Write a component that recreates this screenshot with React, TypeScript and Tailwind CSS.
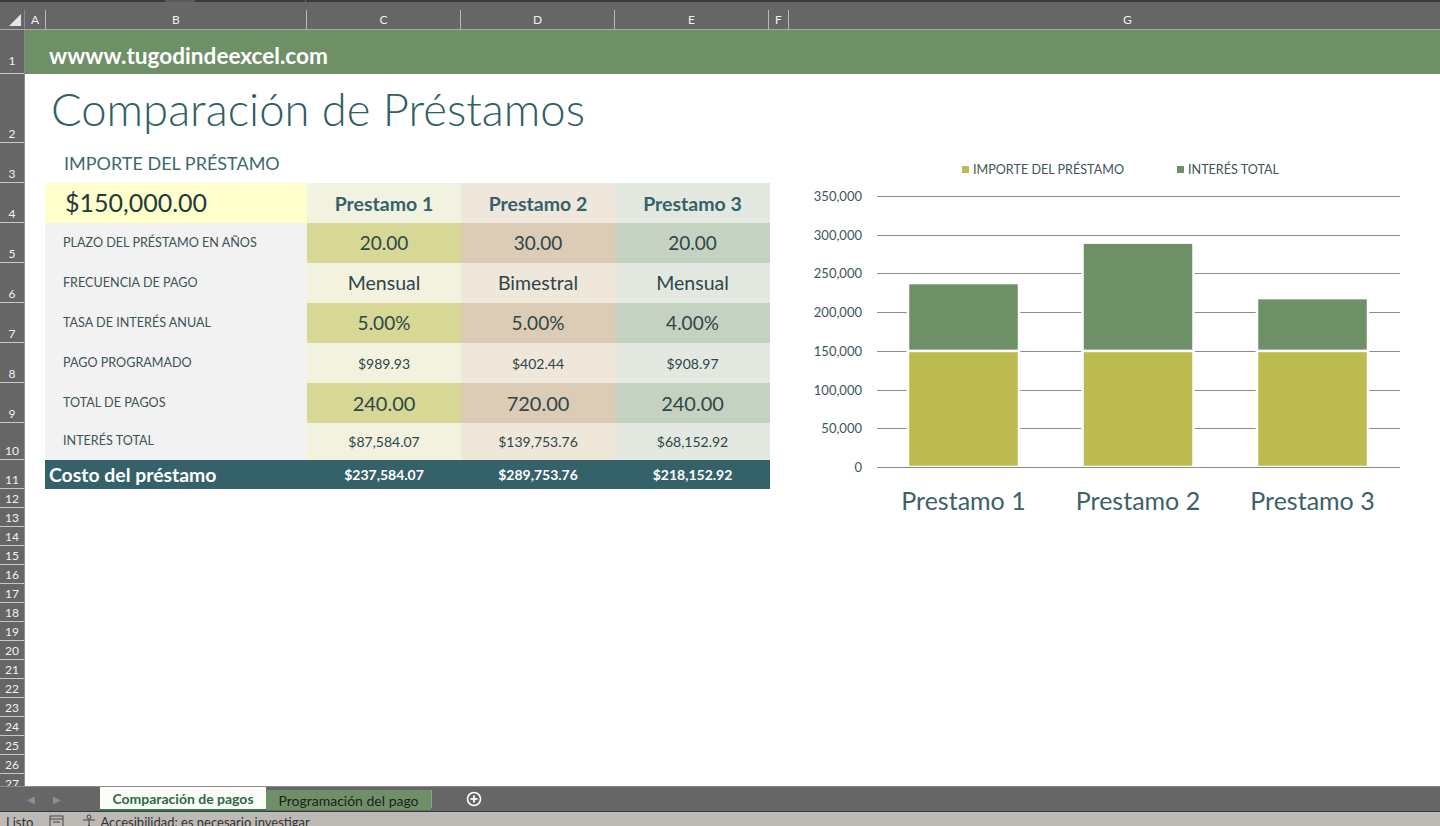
import React from "react";

const FONT = { fontFamily: "Lato, 'Open Sans', 'Liberation Sans', sans-serif" };

const rowHeights: number[] = [44, 69, 40, 40, 40, 40, 40, 40, 40, 37, 29, 19, 19, 19, 19, 19, 19, 19, 19, 19, 19, 19, 19, 19, 19, 19, 19];

type Row = { label: string; vals: string[]; dark: boolean; size: string; h: string };

const rows: Row[] = [
  { label: "PLAZO DEL PRÉSTAMO EN AÑOS", vals: ["20.00", "30.00", "20.00"], dark: true, size: "text-[19px]", h: "h-[40px]" },
  { label: "FRECUENCIA DE PAGO", vals: ["Mensual", "Bimestral", "Mensual"], dark: false, size: "text-[19.5px]", h: "h-[40px]" },
  { label: "TASA DE INTERÉS ANUAL", vals: ["5.00%", "5.00%", "4.00%"], dark: true, size: "text-[19px]", h: "h-[40px]" },
  { label: "PAGO PROGRAMADO", vals: ["$989.93", "$402.44", "$908.97"], dark: false, size: "text-[14px]", h: "h-[40px]" },
  { label: "TOTAL DE PAGOS", vals: ["240.00", "720.00", "240.00"], dark: true, size: "text-[20px]", h: "h-[40px]" },
  { label: "INTERÉS TOTAL", vals: ["$87,584.07", "$139,753.76", "$68,152.92"], dark: false, size: "text-[14px]", h: "h-[37px]" },
];

const darkBg = ["bg-[#d7d895]", "bg-[#dccbb5]", "bg-[#c5d2c1]"];
const lightBg = ["bg-[#f2f2df]", "bg-[#efe7da]", "bg-[#e3e9e1]"];
const colW = ["w-[154px]", "w-[154px]", "w-[155px]"];

function ColHeader() {
  const cols: { l: string; w: string }[] = [
    { l: "A", w: "w-[21px]" },
    { l: "B", w: "w-[261px]" },
    { l: "C", w: "w-[154px]" },
    { l: "D", w: "w-[154px]" },
    { l: "E", w: "w-[154px]" },
    { l: "F", w: "w-[20px]" },
    { l: "G", w: "w-[678px]" },
  ];
  return (
    <div className="flex h-[20px] shrink-0 border-b border-[#a9a9a9] bg-[#666666] overflow-hidden">
      <div className="relative w-[25px] shrink-0 border-r border-[#8a8a8a]">
        <svg width="12" height="12" className="absolute right-[3px] bottom-[3px]">
          <polygon points="12,0 12,12 0,12" fill="#e6e6e6" />
        </svg>
      </div>
      {cols.map((c) => (
        <div
          key={c.l}
          className={`${c.w} shrink-0 flex items-center justify-center border-r border-[#b8b8b8] text-[12px] text-[#f0f0f0] leading-none pt-[1px]`}
        >
          {c.l}
        </div>
      ))}
    </div>
  );
}

function RowHeaders() {
  return (
    <div className="w-[25px] shrink-0 bg-[#666666] border-r border-[#8a8a8a] overflow-hidden">
      {rowHeights.map((h, i) => (
        <div
          key={i}
          style={{ height: h }}
          className={`flex items-end justify-center border-b border-[#c8c8c8] text-[12px] text-[#f2f2f2] leading-none ${i === 0 ? "pb-[6px]" : "pb-[2px]"}`}
        >
          {i + 1}
        </div>
      ))}
    </div>
  );
}

function Chart() {
  const y0 = 324;
  const scale = 271 / 350000;
  const ticks = [0, 50000, 100000, 150000, 200000, 250000, 300000, 350000];
  const bars = [
    { c: 173.5, total: 237584.07, name: "Prestamo 1" },
    { c: 348, total: 289753.76, name: "Prestamo 2" },
    { c: 522.5, total: 218152.92, name: "Prestamo 3" },
  ];
  const fmt = (n: number) => n.toLocaleString("en-US");
  return (
    <svg width="650" height="380" className="block" style={FONT}>
      <rect x="172" y="23" width="7" height="7" fill="#bcbb50" />
      <text x="183" y="31" fontSize="12.6" fill="#3e5559">IMPORTE DEL PRÉSTAMO</text>
      <rect x="387" y="23" width="7" height="7" fill="#6e9066" />
      <text x="398" y="31" fontSize="12.6" fill="#3e5559">INTERÉS TOTAL</text>
      {ticks.map((t) => {
        const y = Math.round(y0 - t * scale) + 0.5;
        return (
          <g key={t}>
            <line x1="87" x2="610" y1={y} y2={y} stroke="#8c8c8c" strokeWidth="1" />
            <text x="72" y={y + 4.5} fontSize="13" fill="#3e5559" textAnchor="end">
              {fmt(t)}
            </text>
          </g>
        );
      })}
      {bars.map((b) => {
        const yTop = y0 - b.total * scale;
        const yMid = y0 - 150000 * scale;
        const x = b.c - 55.5;
        return (
          <g key={b.name}>
            <rect x={x} y={yMid} width="111" height={y0 - yMid} fill="#bcbb50" stroke="#ffffff" strokeWidth="2.5" />
            <rect x={x} y={yTop} width="111" height={yMid - yTop} fill="#6e9066" stroke="#ffffff" strokeWidth="2.5" />
            <line x1={x - 4} x2={x + 115} y1={y0 + 0.5} y2={y0 + 0.5} stroke="#8c8c8c" strokeWidth="1" />
            <text x={b.c} y="367" fontSize="25" fill="#3b6268" textAnchor="middle">
              {b.name}
            </text>
          </g>
        );
      })}
    </svg>
  );
}

function Table() {
  return (
    <div className="w-[725px] shrink-0">
      <div className="h-[40px] flex items-center pl-[19px] text-[18px] text-[#3b6a70]">IMPORTE DEL PRÉSTAMO</div>
      <div className="flex h-[40px]">
        <div className="w-[262px] bg-[#ffffcc] flex items-center pl-[20px] text-[25px] text-[#213a3d]">$150,000.00</div>
        {["Prestamo 1", "Prestamo 2", "Prestamo 3"].map((p, i) => (
          <div
            key={p}
            className={`${colW[i]} ${i === 0 ? "bg-[#f2f2e0]" : i === 1 ? "bg-[#efe7db]" : "bg-[#e3e9e1]"} flex items-center justify-center pt-[2px] text-[19.5px] font-bold text-[#35626a]`}
          >
            {p}
          </div>
        ))}
      </div>
      {rows.map((r) => (
        <div key={r.label} className={`flex ${r.h}`}>
          <div className="w-[262px] bg-[#f2f2f2] flex items-center pl-[18px] text-[12.6px] text-[#3d5357]">{r.label}</div>
          {r.vals.map((v, i) => (
            <div
              key={i}
              className={`${colW[i]} ${r.dark ? darkBg[i] : lightBg[i]} flex items-center justify-center ${r.size} text-[#2e4649]`}
            >
              {v}
            </div>
          ))}
        </div>
      ))}
      <div className="flex h-[29px] bg-[#35626a] text-white">
        <div className="w-[262px] flex items-center pl-[4px] text-[19.4px] font-bold">Costo del préstamo</div>
        {["$237,584.07", "$289,753.76", "$218,152.92"].map((v, i) => (
          <div key={v} className={`${colW[i]} flex items-center justify-center text-[14px] font-bold`}>
            {v}
          </div>
        ))}
      </div>
    </div>
  );
}

function Tabs() {
  return (
    <div className="h-[26px] shrink-0 flex bg-[#666666] border-t border-[#8a8a8a] border-b border-b-[#3a3a3a]">
      <div className="w-[100px] flex items-center">
        <span className="ml-[27px] text-[#8f8f8f] text-[10px] leading-none">◀</span>
        <span className="ml-[18px] text-[#8f8f8f] text-[10px] leading-none">▶</span>
      </div>
      <div className="w-[166px] bg-[#fbfbf7] border-b-2 border-[#2f7a4f] flex items-center justify-center text-[14px] font-bold text-[#2a6b45]">
        Comparación de pagos
      </div>
      <div className="w-[165px] mt-[3px] mb-[1px] bg-[#6e9066] flex items-center justify-center text-[14px] text-[#1e1e1e]">
        Programación del pago
      </div>
      <div className="w-[1px] my-[3px] bg-[#9a9a9a]" />
      <div className="ml-[34px] flex items-center">
        <svg width="16" height="16" viewBox="0 0 16 16">
          <circle cx="8" cy="8" r="6.5" fill="none" stroke="#ffffff" strokeWidth="1.6" />
          <line x1="8" y1="4.5" x2="8" y2="11.5" stroke="#ffffff" strokeWidth="1.8" />
          <line x1="4.5" y1="8" x2="11.5" y2="8" stroke="#ffffff" strokeWidth="1.8" />
        </svg>
      </div>
    </div>
  );
}

function StatusBar() {
  return (
    <div className="h-[14px] shrink-0 bg-[#bdbab6] overflow-hidden flex items-start text-[13px] text-[#333333] leading-none">
      <span className="ml-[6px] mt-[4px]">Listo</span>
      <svg width="16" height="14" className="ml-[16px] mt-[3px]" viewBox="0 0 16 14">
        <rect x="1" y="1" width="13" height="12" fill="none" stroke="#444" strokeWidth="1" />
        <line x1="1" y1="4" x2="14" y2="4" stroke="#444" />
        <line x1="4" y1="7" x2="11" y2="7" stroke="#444" />
      </svg>
      <svg width="16" height="14" className="ml-[16px] mt-[2px]" viewBox="0 0 16 14">
        <circle cx="8" cy="3" r="2" fill="none" stroke="#444" />
        <path d="M2 6 L14 6 M8 6 L8 11 M8 11 L5 14 M8 11 L11 14" fill="none" stroke="#444" />
      </svg>
      <span className="ml-[3px] mt-[4px]">Accesibilidad: es necesario investigar</span>
    </div>
  );
}

export default function App() {
  return (
    <div className="w-[1440px] h-[826px] overflow-hidden flex flex-col bg-white" style={FONT}>
      <div className="h-[10px] shrink-0 bg-[#666666] flex items-start">
        <div className="h-[2px] w-[165px] bg-[#3a3a3a]" />
        <div className="h-[2px] w-[30px] bg-[#5a5a5a]" />
        <div className="h-[2px] w-[110px] bg-[#3a3a3a]" />
        <div className="h-[2px] flex-1 bg-[#3a3a3a] ml-[1px]" />
      </div>
      <ColHeader />
      <div className="flex-1 flex overflow-hidden">
        <RowHeaders />
        <div className="flex-1 flex flex-col">
          <div className="h-[44px] shrink-0 bg-[#6e9066] flex items-end pb-[1px] pl-[24px] text-[22.6px] font-bold text-white">
            wwww.tugodindeexcel.com
          </div>
          <div className="h-[69px] shrink-0 flex items-center pl-[26px] pt-[2px] text-[45.4px] font-light text-[#2f6066]">
            Comparación de Préstamos
          </div>
          <div className="flex pl-[20px]">
            <Table />
            <div className="ml-[20px]">
              <Chart />
            </div>
          </div>
        </div>
      </div>
      <Tabs />
      <StatusBar />
    </div>
  );
}
